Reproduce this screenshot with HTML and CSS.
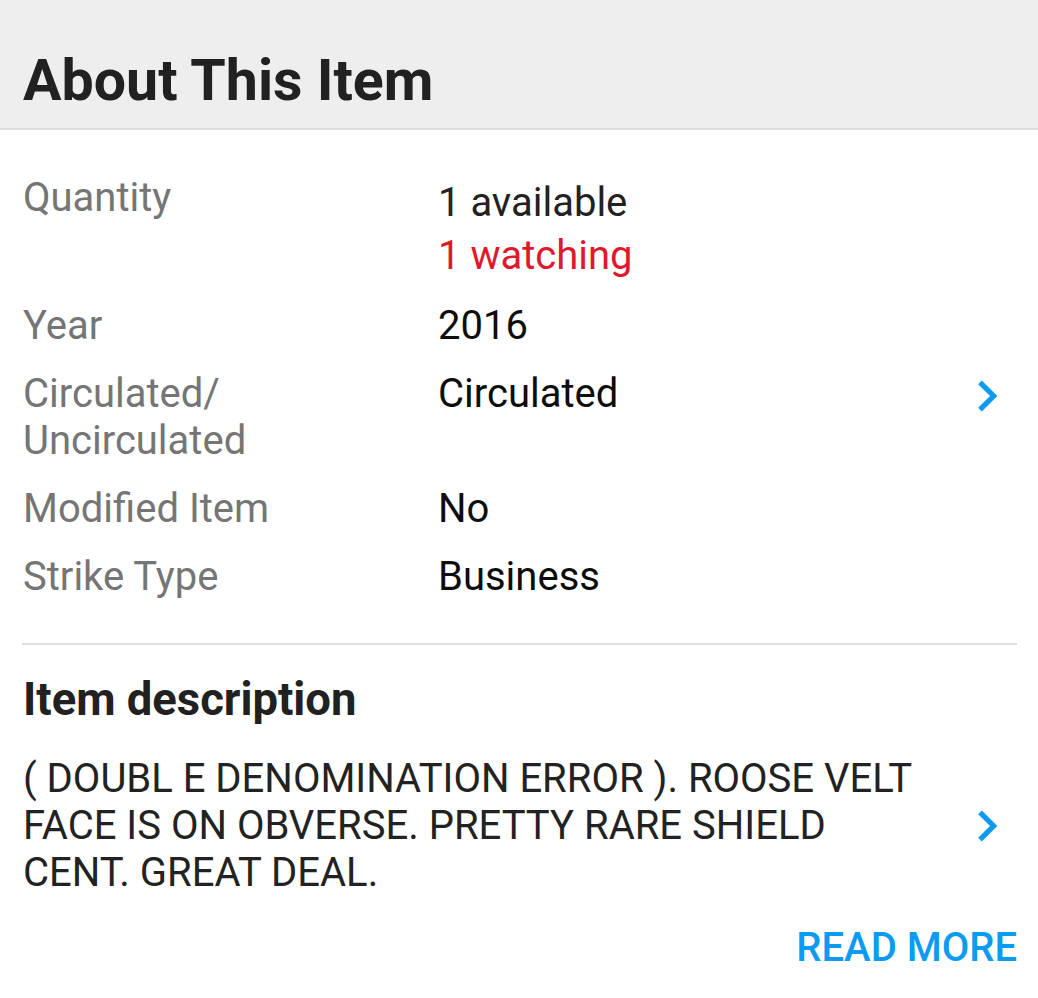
FILE: index.html
```html
<!DOCTYPE html>
<html lang="en">
<head>
    <meta charset="UTF-8">
    <meta name="viewport" content="width=device-width, initial-scale=1.0">
    <title>About This Item</title>
    <link rel="stylesheet" href="styles.css">
</head>
<body>

    <div class="section-header">
        <h1>About This Item</h1>
    </div>

    <div class="content">
        <!-- Especificaciones del artículo -->
        <div class="specs">
            <div class="spec-row">
                <div class="spec-label">Quantity</div>
                <div class="spec-value quantity">
                    <div class="available">1 available</div>
                    <div class="watching">1 watching</div>
                </div>
            </div>
            <div class="spec-row">
                <div class="spec-label">Year</div>
                <div class="spec-value">2016</div>
            </div>
            <div class="spec-row">
                <div class="spec-label">Circulated/<br>Uncirculated</div>
                <div class="spec-value with-action">
                    <span>Circulated</span>
                    <svg class="chevron" viewBox="0 0 24 24"><path d="M10 6L8.59 7.41 13.17 12l-4.58 4.59L10 18l6-6z"/></svg>
                </div>
            </div>
            <div class="spec-row">
                <div class="spec-label">Modified Item</div>
                <div class="spec-value">No</div>
            </div>
            <div class="spec-row">
                <div class="spec-label">Strike Type</div>
                <div class="spec-value">Business</div>
            </div>
        </div>

        <hr class="divider">

        <!-- Descripción -->
        <h2 class="desc-title">Item description</h2>
        <div class="desc-row">
            <p class="desc-text">( DOUBL E DENOMINATION ERROR ). ROOSE VELT FACE IS ON OBVERSE. PRETTY RARE SHIELD CENT. GREAT DEAL.</p>
            <svg class="chevron" viewBox="0 0 24 24"><path d="M10 6L8.59 7.41 13.17 12l-4.58 4.59L10 18l6-6z"/></svg>
        </div>
        <div class="read-more">READ MORE</div>
    </div>

</body>
</html>
```

FILE: styles.css
```css
body {
    margin: 0;
    font-family: Roboto, 'Liberation Sans', sans-serif;
    background-color: #fff;
    color: #212121;
}
.section-header {
    background-color: #eeeeee;
    border-bottom: 2px solid #dddddd;
    height: 130px;
    box-sizing: border-box;
    padding: 46px 23px 0;
}
.section-header h1 {
    margin: 0;
    font-size: 57.3px;
    line-height: 70px;
    font-weight: 700;
    color: #212121;
}
.content {
    padding: 44px 21px 0 23px;
}
.specs {
    display: flex;
    flex-direction: column;
    gap: 21px;
}
.spec-row {
    display: flex;
    font-size: 40px;
    line-height: 47px;
}
.spec-label {
    width: 415px;
    flex-shrink: 0;
    color: #757575;
}
.spec-value {
    flex: 1;
    color: #0d0d0d;
}
.spec-value.quantity {
    padding-top: 5px;
    padding-bottom: 2px;
}
.available {
    color: #222;
}
.watching {
    color: #e0182e;
    margin-top: 6px;
}
.with-action {
    display: flex;
    justify-content: space-between;
    align-items: flex-start;
    margin-right: -1px;
}
.with-action .chevron {
    margin-top: -5px;
}
.chevron {
    width: 62px;
    height: 62px;
    fill: #0d9bf2;
    flex-shrink: 0;
}
.divider {
    border: none;
    height: 2px;
    background-color: #dcdcdc;
    margin: 43px 0 0 -1px;
}
.desc-title {
    margin: 29px 0 0;
    font-size: 45.4px;
    line-height: 52px;
    font-weight: 700;
    color: #212121;
}
.desc-row {
    display: flex;
    align-items: center;
    gap: 26px;
    margin-top: 29px;
    margin-right: -1px;
}
.desc-text {
    flex: 1;
    margin: 0;
    font-size: 40px;
    line-height: 47px;
    color: #222;
}
.read-more {
    margin-top: 28px;
    text-align: right;
    font-size: 40px;
    line-height: 47px;
    font-weight: 500;
    color: #0d9bf2;
}
```
